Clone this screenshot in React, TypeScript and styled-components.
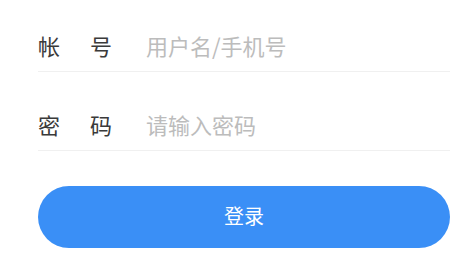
import React from "react";
import styled, { createGlobalStyle } from "styled-components";

const GlobalStyle = createGlobalStyle`
  html, body {
    margin: 0;
    padding: 0;
    background: #ffffff;
  }
  body {
    font-family: "Noto Sans CJK SC", "Noto Sans", sans-serif;
  }
`;

const Form = styled.form`
  display: flex;
  flex-direction: column;
  padding: 19px 22px 0 38px;
`;

const Field = styled.label<{ $first?: boolean }>`
  display: flex;
  align-items: center;
  height: 52px;
  margin-top: ${(p) => (p.$first ? "0" : "26px")};
  border-bottom: 1px solid #f0f0f0;
`;

const Label = styled.span`
  display: flex;
  justify-content: space-between;
  width: 74px;
  flex-shrink: 0;
  font-size: 22px;
  color: #3a3a3a;
  line-height: 1;
`;

const Input = styled.input`
  flex: 1;
  margin-left: 34px;
  border: none;
  outline: none;
  padding: 0;
  background: transparent;
  font-family: inherit;
  font-size: 22px;
  color: #333333;

  &::placeholder {
    color: #bcbcbc;
  }
`;

const Submit = styled.button`
  margin-top: 35px;
  height: 62px;
  border: none;
  border-radius: 31px;
  background: #3a8ff6;
  color: #ffffff;
  font-family: inherit;
  font-size: 20px;
  line-height: 1;
  padding: 0 0 3px;
  cursor: pointer;
`;

const fields = [
  { label: ["帐", "号"], placeholder: "用户名/手机号", type: "text" },
  { label: ["密", "码"], placeholder: "请输入密码", type: "password" },
];

export default function App() {
  return (
    <>
      <GlobalStyle />
      <Form onSubmit={(e) => e.preventDefault()}>
        {fields.map((f, i) => (
          <Field key={f.placeholder} $first={i === 0}>
            <Label>
              <span>{f.label[0]}</span>
              <span>{f.label[1]}</span>
            </Label>
            <Input type={f.type} placeholder={f.placeholder} />
          </Field>
        ))}
        <Submit type="submit">登录</Submit>
      </Form>
    </>
  );
}
